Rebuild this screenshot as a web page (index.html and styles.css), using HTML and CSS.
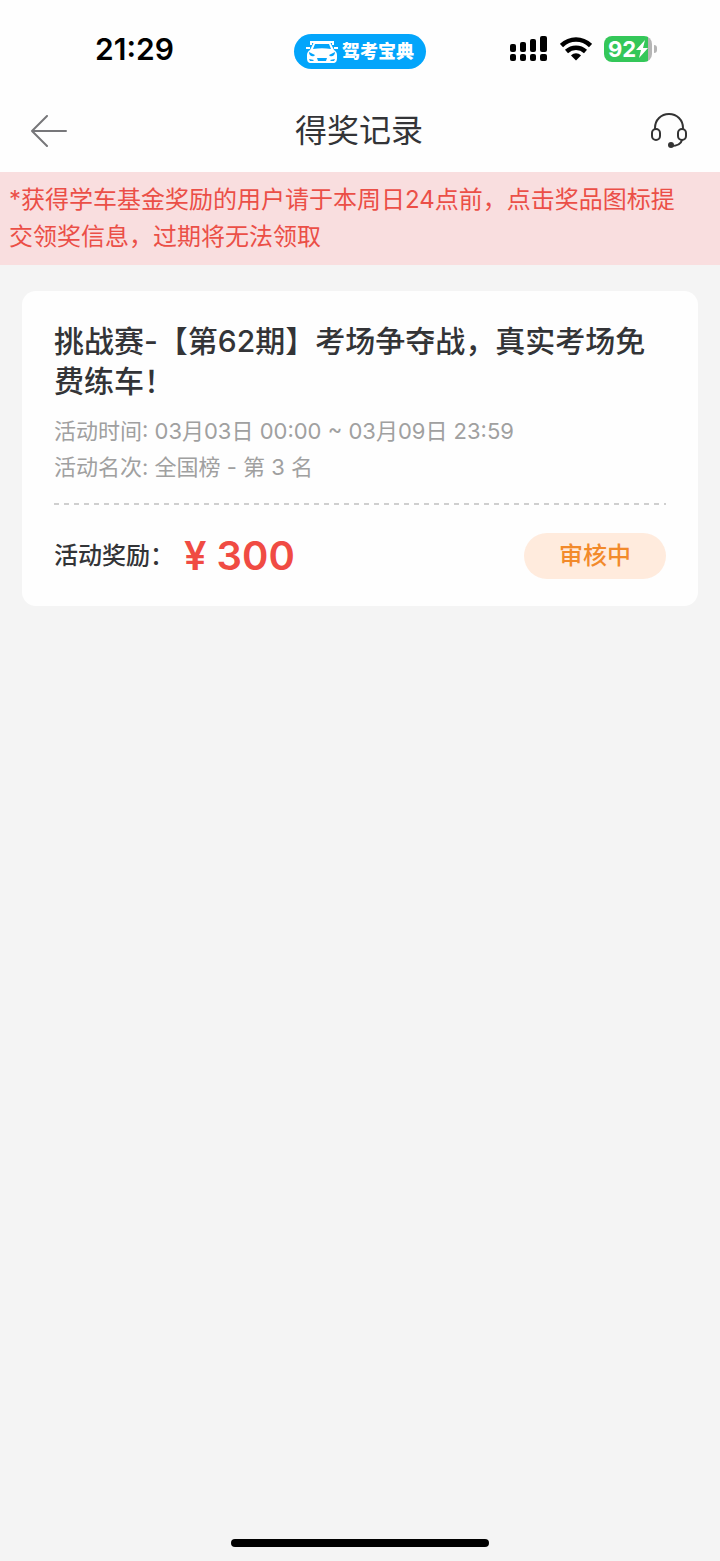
FILE: index.html
```html
<!DOCTYPE html>
<html lang="zh-CN">
<head>
<meta charset="UTF-8">
<meta name="viewport" content="width=device-width, initial-scale=1">
<title>得奖记录</title>
<link rel="stylesheet" href="styles.css">
</head>
<body>

<!-- 状态栏 -->
<div class="status-bar">
  <div class="status-time">21:29</div>
  <div class="app-pill">
    <svg class="car-icon" viewBox="0 0 32 24" aria-hidden="true">
      <path d="M5 5V2h22v3" fill="none" stroke="#fff" stroke-width="2"/>
      <path d="M8 2h16l4 8c2 1 3 3 3 5v3c0 3-1 5-4 5H5c-3 0-4-2-4-5v-3c0-2 1-4 3-5z" fill="#fff"/>
      <path d="M9 4h14l2 5c-6-1-12-1-18 0z" fill="#03a5fb"/>
      <path d="M0 8h4M28 8h4" stroke="#fff" stroke-width="2"/>
      <path d="M3 12l6 3c-1 2-6 2-6-3zM29 12l-6 3c1 2 6 2 6-3zM11 18h10l-1 3h-8zM3 19l5 1-1 1H4zM29 19l-5 1 1 1h3z" fill="#03a5fb"/>
    </svg>
    <span>驾考宝典</span>
  </div>
  <div class="status-icons">
    <svg class="signal-icon" viewBox="0 0 38 26" aria-hidden="true">
      <rect x="0" y="8" width="6" height="8" rx="2"/>
      <rect x="10" y="6" width="6" height="10" rx="2"/>
      <rect x="20" y="3" width="6" height="13" rx="2"/>
      <rect x="30" y="0" width="7" height="16" rx="2"/>
      <rect x="0" y="18" width="6" height="7" rx="2"/>
      <rect x="10" y="18" width="6" height="7" rx="2"/>
      <rect x="20" y="18" width="6" height="7" rx="2"/>
      <rect x="30" y="18" width="7" height="7" rx="2"/>
    </svg>
    <svg class="wifi-icon" viewBox="0 0 32 24" aria-hidden="true">
      <path d="M1.500 8.500C10 0.500 22 0.500 30.500 8.500" fill="none" stroke="#000" stroke-width="4.500"/>
      <path d="M6.500 14.500c5.500-5 13.500-5 19 0" fill="none" stroke="#000" stroke-width="4.500"/>
      <path d="M11 18.500c3-3 7-3 10 0L16 23.500z"/>
    </svg>
    <div class="battery">
      <div class="battery-body">
        <span>92</span>
        <svg class="bolt-icon" viewBox="0 0 12 18" aria-hidden="true">
          <path d="M9 0L0 10h5L3 18l9-10H7z" fill="#fff"/>
        </svg>
      </div>
      <div class="battery-tip"></div>
    </div>
  </div>
</div>

<!-- 导航栏 -->
<header class="nav">
  <button class="nav-button" type="button" aria-label="返回">
    <svg class="back-icon" viewBox="0 0 36 32" aria-hidden="true">
      <path d="M16 1L1 16l15 15M1 16h34" fill="none" stroke="#77777a" stroke-width="2" stroke-linecap="round" stroke-linejoin="round"/>
    </svg>
  </button>
  <h1>得奖记录</h1>
  <button class="nav-button" type="button" aria-label="客服">
    <svg class="service-icon" viewBox="0 0 36 36" aria-hidden="true">
      <g fill="none" stroke="#333" stroke-width="2">
        <path d="M4 17v-2C4 7 10 1 18 1s14 6 14 14v2"/>
        <rect x="1" y="16" width="8" height="11" rx="4"/>
        <rect x="27" y="16" width="8" height="11" rx="4"/>
        <path d="M31 27c-1 4-5 6-11 6"/>
      </g>
      <circle cx="20" cy="32" r="3" fill="#333"/>
    </svg>
  </button>
</header>

<p class="notice">*获得学车基金奖励的用户请于本周日24点前，点击奖品图标提交领奖信息，过期将无法领取</p>

<main class="records">
  <article class="card">
    <h2>挑战赛-【第62期】考场争夺战，真实考场免费练车！</h2>
    <div class="card-info">
      <p>活动时间: 03月03日 00:00 ~ 03月09日 23:59</p>
      <p>活动名次: 全国榜 - 第 3 名</p>
    </div>
    <div class="card-line"></div>
    <div class="card-reward">
      <span class="reward-label">活动奖励：</span>
      <span class="reward-sum">¥ 300</span>
      <button class="reward-status" type="button">审核中</button>
    </div>
  </article>
</main>

<div class="home-bar"></div>

</body>
</html>
```
FILE: styles.css
```css
* {
    margin: 0;
    padding: 0;
    box-sizing: border-box;
}

body {
    font-family: Inter, "Noto Sans CJK SC", sans-serif;
    background: #f4f4f4;
    color: #333437;
    display: flex;
    flex-direction: column;
    min-height: 100vh;
}

button {
    font-family: inherit;
    border: none;
    background: none;
    cursor: pointer;
}

svg {
    display: block;
    flex-shrink: 0;
}

/* 状态栏 */
.status-bar {
    display: grid;
    grid-template-columns: 1fr auto 1fr;
    align-items: start;
    height: 90px;
    padding: 34px 63px 0;
    background: #fefefe;
    color: #000;
}
.status-time {
    padding-left: 32px;
    font-size: 30px;
    font-weight: 600;
    line-height: 30px;
}
.app-pill {
    display: flex;
    align-items: center;
    gap: 4px;
    height: 35px;
    padding: 0 12px;
    border-radius: 18px;
    background: #03a5fb;
    color: #fff;
    font-size: 18px;
    font-weight: 900;
    line-height: 26px;
}
.car-icon {
    width: 32px;
    height: 24px;
}
.status-icons {
    display: flex;
    align-items: center;
    justify-content: flex-end;
    gap: 12px;
    height: 30px;
}
.signal-icon {
    width: 38px;
    height: 26px;
}
.wifi-icon {
    width: 32px;
    height: 24px;
}
.battery {
    display: flex;
    align-items: center;
    gap: 2px;
}
.battery-body {
    display: flex;
    align-items: center;
    justify-content: center;
    width: 48px;
    height: 26px;
    border-radius: 8px;
    background: linear-gradient(90deg, #34c759 92%, #b5b5b5 92%);
    color: #fff;
    font-size: 22px;
    font-weight: 700;
    line-height: 26px;
}
.bolt-icon {
    width: 12px;
    height: 18px;
}
.battery-tip {
    width: 3px;
    height: 8px;
    border-radius: 0 4px 4px 0;
    background: #b5b5b5;
}

/* 导航栏 */
.nav {
    display: flex;
    align-items: center;
    justify-content: space-between;
    height: 82px;
    padding: 0 33px 0 31px;
    background: #fefefe;
}
.nav h1 {
    font-size: 32px;
    font-weight: 400;
    line-height: 40px;
}
.back-icon {
    width: 36px;
    height: 32px;
}
.service-icon {
    width: 36px;
    height: 36px;
}

/* 领奖提示 */
.notice {
    padding: 9px 24px 10px 9px;
    background: #f9dedf;
    color: #eb4f47;
    font-size: 24px;
    line-height: 37px;
}

/* 得奖卡片 */
.records {
    flex: 1;
    padding: 26px 22px;
}
.card {
    padding: 30px 32px 27px;
    border-radius: 14px;
    background: #fefefe;
}
.card h2 {
    font-size: 30px;
    font-weight: 500;
    line-height: 40px;
}
.card-info {
    margin-top: 12px;
    color: #a0a0a0;
    font-size: 22px;
    line-height: 36px;
}
.card-line {
    height: 2px;
    margin: 18px 0 28px;
    background: repeating-linear-gradient(90deg, #cfcfcf 0 5px, transparent 5px 10px);
}
.card-reward {
    display: flex;
    align-items: center;
}
.reward-label {
    font-size: 24px;
    font-weight: 500;
    line-height: 36px;
}
.reward-sum {
    margin-left: 10px;
    color: #f04b43;
    font-size: 40px;
    font-weight: 600;
    line-height: 46px;
}
.reward-status {
    width: 142px;
    height: 46px;
    margin-left: auto;
    border-radius: 23px;
    background: #ffebdd;
    color: #f28a2b;
    font-size: 24px;
    font-weight: 500;
    line-height: 46px;
}

.home-bar {
    width: 258px;
    height: 8px;
    margin: 0 auto 14px;
    border-radius: 4px;
    background: #000;
}
```
